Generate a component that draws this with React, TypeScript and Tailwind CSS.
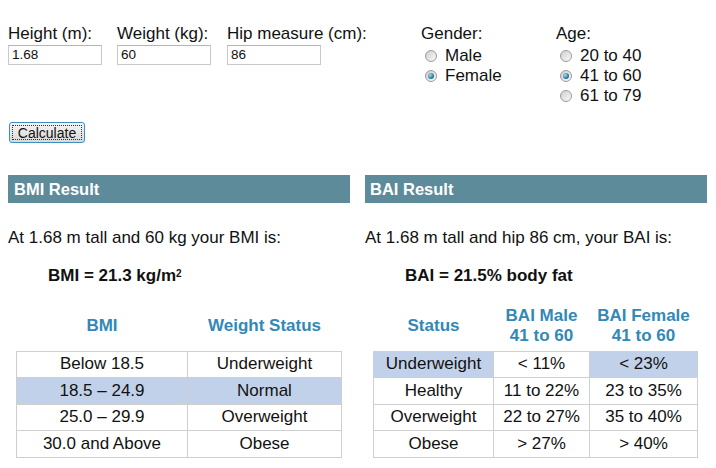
import React from "react";

const font = { fontFamily: '"Liberation Sans", Arial, sans-serif' };

function Radio({ checked, label }: { checked?: boolean; label: string }) {
  return (
    <div className="flex items-center h-[20px]">
      <span className="ml-[4px] w-[12px] h-[12px] rounded-full border border-[#9a9a9a] bg-linear-to-br from-[#cfcfcf] to-[#fafafa] flex items-center justify-center">
        {checked && (
          <span className="w-[6px] h-[6px] rounded-full bg-[radial-gradient(circle_at_35%_35%,#a8dcf5,#1a6a92_70%)]" />
        )}
      </span>
      <span className="ml-[8px] text-[17px] leading-[20px] text-[#111]">{label}</span>
    </div>
  );
}

function Field({ label, value, w }: { label: string; value: string; w: string }) {
  return (
    <div className={`flex flex-col ${w}`}>
      <div className="text-[17px] leading-[20px] text-[#111] whitespace-nowrap">{label}</div>
      <div className="mt-[1px] w-[94px] h-[20px] border border-[#c9c9c9] border-t-[#b5b5b5] bg-white px-[3px] text-[13.5px] leading-[18px] text-[#111]">
        {value}
      </div>
    </div>
  );
}

export default function App() {
  const td = "border border-[#cfcfcf] text-center text-[17px] h-[26.5px] p-0 leading-[20px] text-[#111]";
  const th = "text-center text-[17px] font-bold text-[#3288b6] leading-[20px] p-0 align-middle";
  const hl = "bg-[#c2d1ea]";
  return (
    <div style={font} className="w-[716px] h-[468px] bg-white overflow-hidden relative">
      {/* top form */}
      <div className="flex pt-[24px] pl-[8px]">
        <Field label="Height (m):" value="1.68" w="w-[109px]" />
        <Field label="Weight (kg):" value="60" w="w-[110px]" />
        <Field label="Hip measure (cm):" value="86" w="w-[195px]" />
        <div className="flex flex-col w-[135px] -ml-[1px]">
          <div className="text-[17px] leading-[20px] text-[#111] mb-[2px]">Gender:</div>
          <Radio label="Male" />
          <Radio checked label="Female" />
        </div>
        <div className="flex flex-col">
          <div className="text-[17px] leading-[20px] text-[#111] mb-[2px]">Age:</div>
          <Radio label="20 to 40" />
          <Radio checked label="41 to 60" />
          <Radio label="61 to 79" />
        </div>
      </div>

      <div className="pl-[9px] mt-[16px]">
        <button className="w-[76px] h-[21px] rounded-[3px] border border-[#3d8fc2] bg-linear-to-b from-[#f4f4f4] to-[#d9d9d9] p-[2px] flex">
          <span className="flex-1 border border-dotted border-[#333] flex items-center justify-center text-[14px] leading-[14px] text-[#111]">
            Calculate
          </span>
        </button>
      </div>

      <div className="flex pl-[8px] mt-[32px] gap-[15px]">
        {/* BMI column */}
        <div className="w-[342px] flex flex-col">
          <div className="h-[28px] bg-[#5d8b9a] text-white font-bold text-[16.5px] leading-[28px] pl-[6px]">BMI Result</div>
          <div className="mt-[25px] text-[17px] leading-[20px] text-[#111]">At 1.68 m tall and 60 kg your BMI is:</div>
          <div className="mt-[18px] pl-[40px] text-[17px] leading-[20px] font-bold text-[#111]">
            BMI = 21.3 kg/m<sup className="text-[10px] leading-none relative -top-[4px]">2</sup>
          </div>
          <table className="mt-[15px] ml-[8px] w-[326px] border-collapse">
            <thead>
              <tr className="h-[50px]">
                <th className={`${th} w-[171px]`}>BMI</th>
                <th className={th}>Weight Status</th>
              </tr>
            </thead>
            <tbody>
              <tr>
                <td className={td}>Below 18.5</td>
                <td className={td}>Underweight</td>
              </tr>
              <tr className={hl}>
                <td className={td}>18.5 – 24.9</td>
                <td className={td}>Normal</td>
              </tr>
              <tr>
                <td className={td}>25.0 – 29.9</td>
                <td className={td}>Overweight</td>
              </tr>
              <tr>
                <td className={td}>30.0 and Above</td>
                <td className={td}>Obese</td>
              </tr>
            </tbody>
          </table>
        </div>

        {/* BAI column */}
        <div className="w-[342px] flex flex-col">
          <div className="h-[28px] bg-[#5d8b9a] text-white font-bold text-[16.5px] leading-[28px] pl-[5px]">BAI Result</div>
          <div className="mt-[25px] text-[17px] leading-[20px] text-[#111]">At 1.68 m tall and hip 86 cm, your BAI is:</div>
          <div className="mt-[18px] pl-[40px] text-[17px] leading-[20px] font-bold text-[#111]">BAI = 21.5% body fat</div>
          <table className="mt-[15px] ml-[8px] w-[325px] border-collapse">
            <thead>
              <tr className="h-[50px]">
                <th className={`${th} w-[120px]`}>Status</th>
                <th className={`${th} w-[96px]`}>
                  BAI Male
                  <br />
                  41 to 60
                </th>
                <th className={th}>
                  BAI Female
                  <br />
                  41 to 60
                </th>
              </tr>
            </thead>
            <tbody>
              <tr>
                <td className={`${td} ${hl}`}>Underweight</td>
                <td className={td}>&lt; 11%</td>
                <td className={`${td} ${hl}`}>&lt; 23%</td>
              </tr>
              <tr>
                <td className={td}>Healthy</td>
                <td className={td}>11 to 22%</td>
                <td className={td}>23 to 35%</td>
              </tr>
              <tr>
                <td className={td}>Overweight</td>
                <td className={td}>22 to 27%</td>
                <td className={td}>35 to 40%</td>
              </tr>
              <tr>
                <td className={td}>Obese</td>
                <td className={td}>&gt; 27%</td>
                <td className={td}>&gt; 40%</td>
              </tr>
            </tbody>
          </table>
        </div>
      </div>
    </div>
  );
}
